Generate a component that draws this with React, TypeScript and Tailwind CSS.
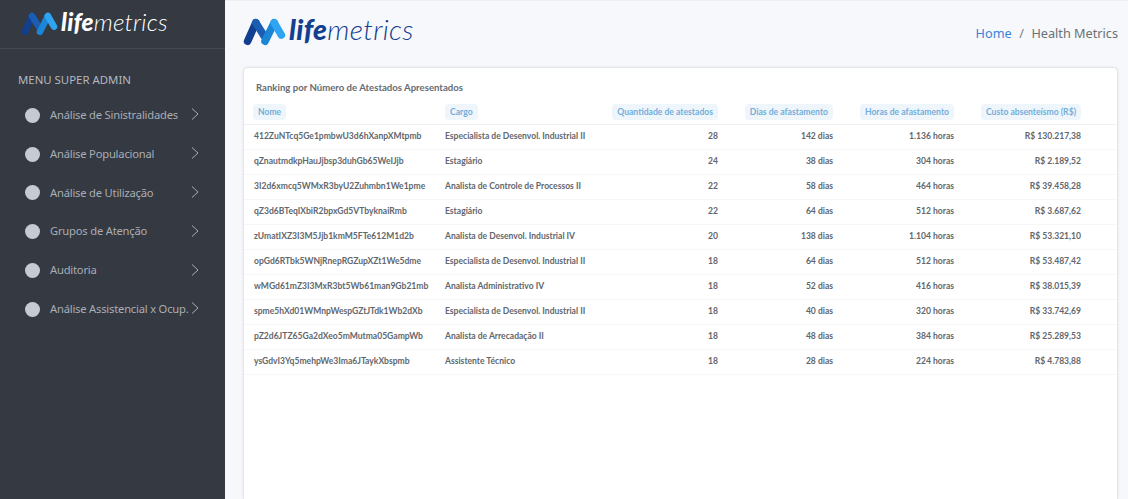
const menuItems = [
  "Análise de Sinistralidades",
  "Análise Populacional",
  "Análise de Utilização",
  "Grupos de Atenção",
  "Auditoria",
  "Análise Assistencial x Ocup.",
];

const columns = [
  "Nome",
  "Cargo",
  "Quantidade de atestados",
  "Dias de afastamento",
  "Horas de afastamento",
  "Custo absenteísmo (R$)",
];

const rows = [
  ["412ZuNTcq5Ge1pmbwU3d6hXanpXMtpmb", "Especialista de Desenvol. Industrial II", "28", "142 dias", "1.136 horas", "R$ 130.217,38"],
  ["qZnautmdkpHauJjbsp3duhGb65WeIJjb", "Estagiário", "24", "38 dias", "304 horas", "R$ 2.189,52"],
  ["3I2d6xmcq5WMxR3byU2Zuhmbn1We1pme", "Analista de Controle de Processos II", "22", "58 dias", "464 horas", "R$ 39.458,28"],
  ["qZ3d6BTeqIXbiR2bpxGd5VTbyknaiRmb", "Estagiário", "22", "64 dias", "512 horas", "R$ 3.687,62"],
  ["zUmatIXZ3I3M5Jjb1kmM5FTe612M1d2b", "Analista de Desenvol. Industrial IV", "20", "138 dias", "1.104 horas", "R$ 53.321,10"],
  ["opGd6RTbk5WNjRnepRGZupXZt1We5dme", "Especialista de Desenvol. Industrial II", "18", "64 dias", "512 horas", "R$ 53.487,42"],
  ["wMGd61mZ3I3MxR3bt5Wb61man9Gb21mb", "Analista Administrativo IV", "18", "52 dias", "416 horas", "R$ 38.015,39"],
  ["spme5hXd01WMnpWespGZtJTdk1Wb2dXb", "Especialista de Desenvol. Industrial II", "18", "40 dias", "320 horas", "R$ 33.742,69"],
  ["pZ2d6JTZ65Ga2dXeo5mMutma05GampWb", "Analista de Arrecadação II", "18", "48 dias", "384 horas", "R$ 25.289,53"],
  ["ysGdvI3Yq5mehpWe3Ima6JTaykXbspmb", "Assistente Técnico", "18", "28 dias", "224 horas", "R$ 4.783,88"],
];

// logo mark: two peaks made of rounded strokes
const LogoMark = ({ className }: { className: string }) => (
  <svg viewBox="0 0 42 28" className={className}>
    <path d="M4.5 23.5 L12.5 5.5" stroke="#123f8f" strokeWidth="7.4" strokeLinecap="round" fill="none" />
    <path d="M12.5 5.5 L21 19" stroke="#1a5db3" strokeWidth="7.4" strokeLinecap="round" fill="none" />
    <path d="M21.5 23.5 L30.5 5.5" stroke="#1b85d6" strokeWidth="7.4" strokeLinecap="round" fill="none" />
    <path d="M30.5 5.5 L37.5 17.5" stroke="#2fa4f2" strokeWidth="7.4" strokeLinecap="round" fill="none" />
  </svg>
);

const Chevron = () => (
  <svg viewBox="0 0 8 12" className="w-[8px] h-[12px] -mt-[2px] shrink-0">
    <path d="M1 0.5 L7 6 L1 11.5" stroke="#a9adb4" strokeWidth="1" fill="none" />
  </svg>
);

const Sidebar = () => (
  <aside className="w-[225px] shrink-0 bg-[#343942] font-['Noto_Sans',sans-serif]">
    <div className="h-[49px] border-b border-[#444a54] pl-[21px] pt-[11px] flex items-start gap-[3px]">
      <LogoMark className="w-[37px] h-[25px]" />
      <span className="font-['Lato',sans-serif] italic text-[24.4px] leading-[22px] text-white tracking-[0.2px]">
        <span className="font-black">life</span>
        <span className="font-light">metrics</span>
      </span>
    </div>
    <p className="mt-[22px] pl-[18px] text-[11.4px] leading-[18px] text-[#b4b8bf]">MENU SUPER ADMIN</p>
    <ul className="mt-[7px]">
      {menuItems.map((item) => (
        <li key={item} className="h-[38.8px] flex items-center pl-[25px]">
          <span className="w-[15px] h-[15px] rounded-full bg-[#c6cad3] shrink-0" />
          <span className="ml-[10px] w-[141px] text-[11.2px] tracking-[-0.2px] text-[#a9adb4] whitespace-nowrap">{item}</span>
          <Chevron />
        </li>
      ))}
    </ul>
  </aside>
);

const App = () => {
  return (
    <div className="flex w-[1128px] h-[499px] overflow-hidden bg-[#f6f8fb]">
      <Sidebar />
      <main className="flex-1 flex flex-col pl-[18px] pr-[10px] border-t border-[#eceef1]">
        <div className="h-[66px] flex justify-between">
          <div className="flex items-start gap-[3px] pt-[16px]">
            <LogoMark className="w-[43px] h-[29px]" />
            <span className="font-['Lato',sans-serif] italic text-[28.3px] leading-[24px] text-[#123f8f] tracking-[0.3px]">
              <span className="font-black">life</span>
              <span className="font-light">metrics</span>
            </span>
          </div>
          <div className="pt-[22px] font-['Noto_Sans',sans-serif] text-[12.7px] leading-[20px] whitespace-nowrap">
            <span className="text-[#3d82d6]">Home</span>
            <span className="mx-[7.5px] text-[#7b8087]">/</span>
            <span className="text-[#6b7076]">Health Metrics</span>
          </div>
        </div>
        <section className="flex-1 bg-white rounded-t-[5px] border border-b-0 border-[#e4e6ea] font-['Lato',sans-serif] shadow-[0_0_3px_rgba(0,0,0,0.08)]">
          <h2 className="pl-[12px] pt-[13px] text-[9.6px] leading-[14px] font-bold text-[#666b72]">
            Ranking por Número de Atestados Apresentados
          </h2>
          <div className="mt-[2px]">
            <div className="h-[28px] pt-[2px] grid grid-cols-[192px_168px_105px_115px_121px_127px] px-[9px] items-center border-b border-[#eff1f4]">
              {columns.map((label, i) => (
                <div key={label} className={i > 1 ? "flex justify-end" : "flex"}>
                  <span className="h-[16px] px-[5px] rounded-[4px] bg-[#eef6fc] text-[8.6px] leading-[16px] font-bold text-[#73add9] whitespace-nowrap">
                    {label}
                  </span>
                </div>
              ))}
            </div>
            {rows.map((row) => (
              <div
                key={row[0]}
                className="h-[25px] pb-[1px] grid grid-cols-[192px_168px_105px_115px_121px_127px] px-[9px] items-center border-b border-[#f6f7f9] text-[8.55px] font-bold text-[#62676d]"
              >
                {row.map((cell, i) => (
                  <span key={i} className={i > 1 ? "text-right whitespace-nowrap" : i === 0 ? "pl-[1px] whitespace-nowrap" : "whitespace-nowrap"}>
                    {cell}
                  </span>
                ))}
              </div>
            ))}
          </div>
        </section>
      </main>
    </div>
  );
};

export default App;
